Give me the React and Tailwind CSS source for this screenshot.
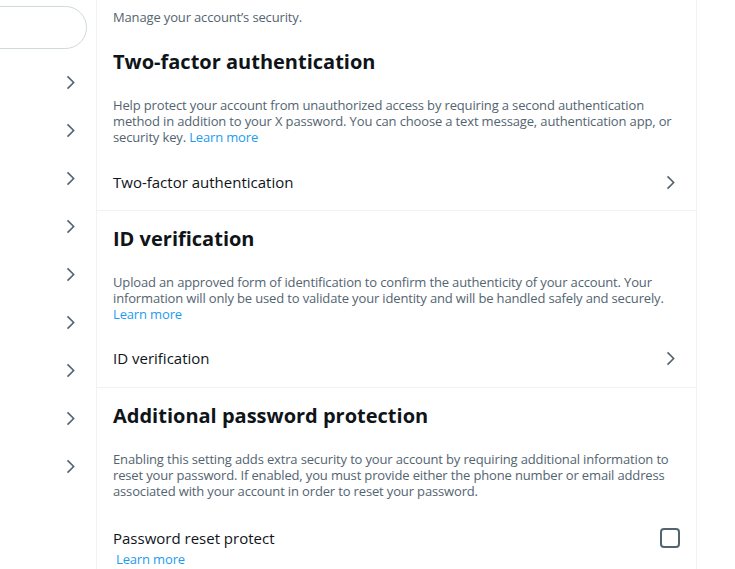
const Chevron = ({ className = '' }) => (
  <svg viewBox="0 0 24 24" className={`w-[19px] h-[19px] fill-[#536471] ${className}`}>
    <path d="M14.586 12L7.543 4.96l1.414-1.42L17.414 12l-8.457 8.46-1.414-1.42L14.586 12z" />
  </svg>
);

const LearnMore = ({ className = '' }) => (
  <a href="#" className={`text-[#1d9bf0] hover:underline ${className}`}>Learn more</a>
);

const navCount = 9;

export default function App() {
  return (
    <div
      className="flex min-h-screen bg-white text-[#0f1419]"
      style={{ fontFamily: '"Open Sans", "Noto Sans", sans-serif' }}
    >
      {/* Left settings nav (cut off) */}
      <div className="w-[96px] shrink-0 overflow-hidden">
        <div className="flex justify-end pt-[6px] pr-[9px]">
          <div className="w-[300px] h-[43px] shrink-0 rounded-full border border-[#cfd9de]" />
        </div>
        <div className="mt-[9px]">
          {Array.from({ length: navCount }).map((_, i) => (
            <div key={i} className="h-12 flex items-center justify-end pr-4">
              <Chevron />
            </div>
          ))}
        </div>
      </div>

      {/* Main column */}
      <div className="w-[601px] shrink-0 border-x border-[#eff3f4]">
        {/* Two-factor */}
        <div className="border-b border-[#eff3f4]">
          <p className="px-4 pt-[9px] text-[13px] leading-4 tracking-[-0.15px] text-[#536471]">Manage your account’s security.</p>
          <h2 className="px-4 pt-[25px] text-[20px] leading-6 font-bold">Two-factor authentication</h2>
          <p className="px-4 mt-[23px] text-[13px] leading-4 tracking-[-0.15px] text-[#536471]">
            Help protect your account from unauthorized access by requiring a second authentication method in addition to your X password. You can choose a text message, authentication app, or security key. <LearnMore />
          </p>
          <div className="px-4 pt-[27px] pb-[18px] flex items-center justify-between">
            <span className="text-[15px] leading-5">Two-factor authentication</span>
            <Chevron />
          </div>
        </div>

        {/* ID verification */}
        <div className="border-b border-[#eff3f4]">
          <h2 className="px-4 pt-4 text-[20px] leading-6 font-bold">ID verification</h2>
          <p className="px-4 mt-[23px] text-[13px] leading-4 tracking-[-0.15px] text-[#536471]">
            Upload an approved form of identification to confirm the authenticity of your account. Your information will only be used to validate your identity and will be handled safely and securely. <LearnMore />
          </p>
          <div className="px-4 pt-[26px] pb-[19px] flex items-center justify-between">
            <span className="text-[15px] leading-5">ID verification</span>
            <Chevron />
          </div>
        </div>

        {/* Additional password protection */}
        <div>
          <h2 className="px-4 pt-4 text-[20px] leading-6 font-bold">Additional password protection</h2>
          <p className="px-4 mt-[23px] text-[13px] leading-4 tracking-[-0.15px] text-[#536471]">
            Enabling this setting adds extra security to your account by requiring additional information to reset your password. If enabled, you must provide either the phone number or email address associated with your account in order to reset your password.
          </p>
          <div className="px-4 pt-[29px]">
            <div className="flex items-center justify-between">
              <span className="text-[15px] leading-5">Password reset protect</span>
              <div className="w-5 h-5 rounded-[4px] border-2 border-[#536471]" />
            </div>
            <div className="pl-[3px] pt-[3px] text-[13px] leading-4 tracking-[-0.15px]">
              <LearnMore />
            </div>
          </div>
        </div>
      </div>
    </div>
  );
}
